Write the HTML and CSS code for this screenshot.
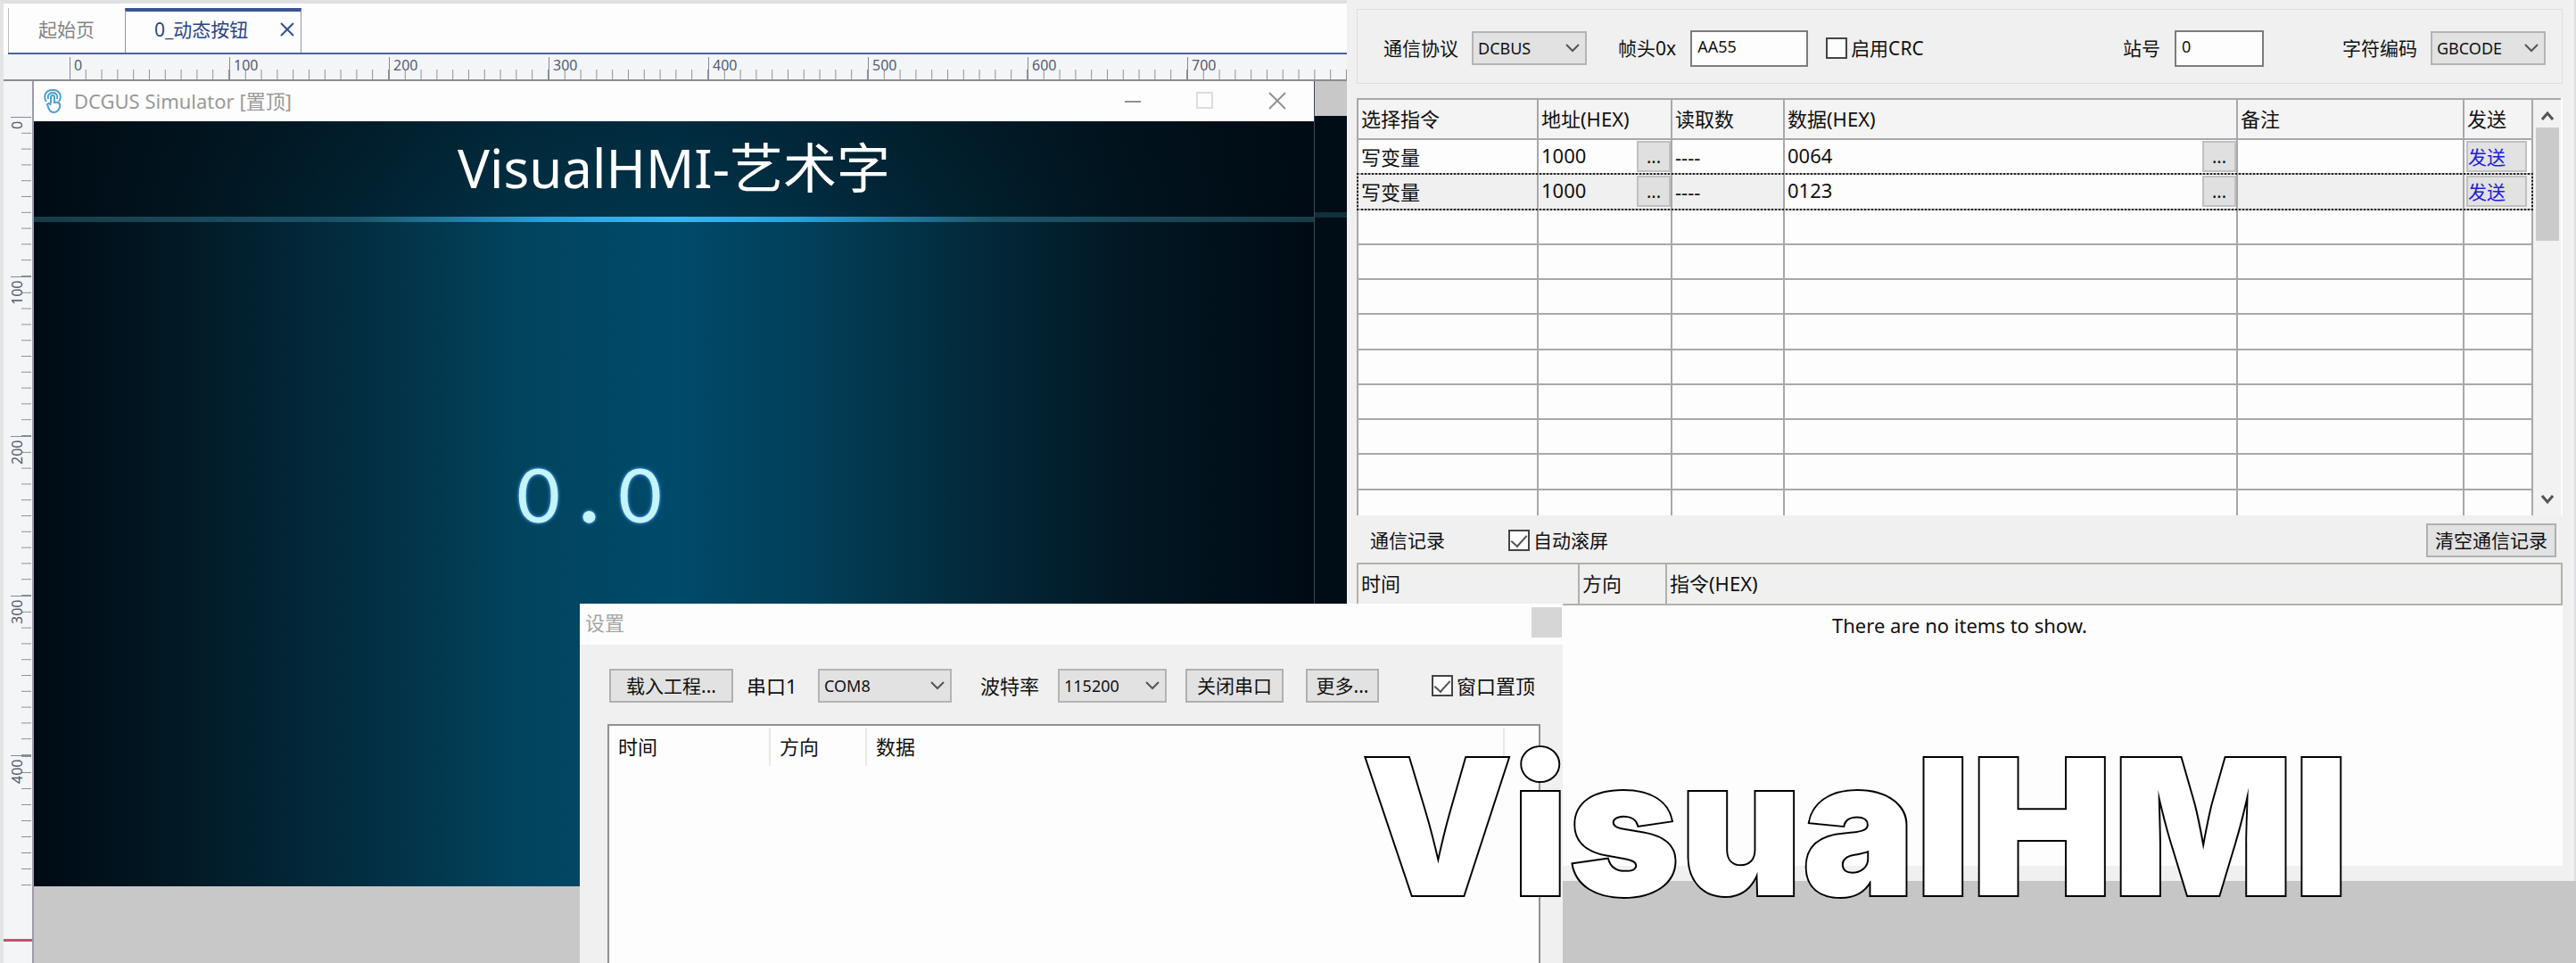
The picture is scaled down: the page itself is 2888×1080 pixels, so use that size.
FILE: index.html
```html
<!DOCTYPE html>
<html lang="zh-CN">
<head>
    <meta charset="UTF-8">
    <title>VisualHMI</title>
    <link rel="stylesheet" href="styles.css">
</head>
<body>
<div class="editor">
    <nav class="tabs">
        <a class="tab" href="#start">起始页</a>
        <div class="tab active">
            <a href="#button">0_动态按钮</a>
            <button class="tab-close" aria-label="关闭">
                <svg width="16" height="16" viewBox="0 0 16 16"><path d="M1 1L15 15M15 1L1 15"/></svg>
            </button>
        </div>
    </nav>
    <div class="ruler-h">
        <span>0</span><span>100</span><span>200</span><span>300</span><span>400</span><span>500</span><span>600</span><span>700</span>
    </div>
    <div class="workspace">
        <div class="ruler-v">
            <span>0</span><span>100</span><span>200</span><span>300</span><span class="last">400</span>
            <i class="marker"></i>
        </div>
        <div class="canvas">
            <div class="page-back"></div>
            <section class="simulator">
                <header class="sim-title">
                    <svg class="sim-icon" width="20" height="28" viewBox="0 0 20 28">
                        <path d="M3 15C0 11 0 2 10 2s10 9 7 13"/>
                        <path d="M5 12C4 8 6 5 10 5s6 3 5 7"/>
                        <path d="M8 17V10a2 2 0 0 1 4 0v6c5-1 7 1 6 5-1 4-3 6-7 6-4 0-6-5-7-9 1-2 3-1 4 1"/>
                    </svg>
                    <span>DCGUS Simulator [置顶]</span>
                    <div class="win-buttons">
                        <button aria-label="最小化"><svg width="20" height="20" viewBox="0 0 20 20"><path d="M1 11H19"/></svg></button>
                        <button aria-label="最大化" disabled><svg width="20" height="20" viewBox="0 0 20 20"><path d="M1 1H18V18H1Z"/></svg></button>
                        <button aria-label="关闭"><svg width="20" height="20" viewBox="0 0 20 20"><path d="M1 1L19 19M19 1L1 19"/></svg></button>
                    </div>
                </header>
                <div class="screen">
                    <h1>VisualHMI-艺术字</h1>
                    <div class="art-number"><span>0</span><span class="dot">.</span><span>0</span></div>
                </div>
            </section>
        </div>
    </div>
</div>

<div class="side">
    <div class="panel">
        <div class="protocol">
            <label for="protocol">通信协议</label>
            <span class="select w-129">
                <select id="protocol"><option>DCBUS</option></select>
                <svg width="16" height="10" viewBox="0 0 16 10"><path d="M1 1L8 8L15 1"/></svg>
            </span>
            <label for="head" class="gap">帧头0x</label>
            <input type="text" id="head" class="w-132" value="AA55">
            <label class="check"><input type="checkbox">启用CRC</label>
            <label for="station" class="push">站号</label>
            <input type="text" id="station" class="w-100" value="0">
            <label for="charset" class="gap wide">字符编码</label>
            <span class="select w-129">
                <select id="charset"><option>GBCODE</option></select>
                <svg width="16" height="10" viewBox="0 0 16 10"><path d="M1 1L8 8L15 1"/></svg>
            </span>
        </div>

        <div class="grid">
            <div class="grid-view">
                <table class="commands">
                    <colgroup><col class="c1"><col class="c2"><col class="c3"><col class="c4"><col class="c5"><col class="c6"></colgroup>
                    <thead>
                        <tr><th>选择指令</th><th>地址(HEX)</th><th>读取数</th><th>数据(HEX)</th><th>备注</th><th>发送</th></tr>
                    </thead>
                    <tbody>
                        <tr>
                            <td>写变量</td>
                            <td><div class="cell">1000<button>...</button></div></td>
                            <td>----</td>
                            <td><div class="cell">0064<button>...</button></div></td>
                            <td></td>
                            <td><button class="send">发送</button></td>
                        </tr>
                        <tr class="selected">
                            <td>写变量</td>
                            <td><div class="cell">1000<button>...</button></div></td>
                            <td>----</td>
                            <td class="edit"><div class="cell">0123<button>...</button></div></td>
                            <td></td>
                            <td><button class="send">发送</button></td>
                        </tr>
                        <tr><td></td><td></td><td></td><td></td><td></td><td></td></tr>
                        <tr><td></td><td></td><td></td><td></td><td></td><td></td></tr>
                        <tr><td></td><td></td><td></td><td></td><td></td><td></td></tr>
                        <tr><td></td><td></td><td></td><td></td><td></td><td></td></tr>
                        <tr><td></td><td></td><td></td><td></td><td></td><td></td></tr>
                        <tr><td></td><td></td><td></td><td></td><td></td><td></td></tr>
                        <tr><td></td><td></td><td></td><td></td><td></td><td></td></tr>
                        <tr><td></td><td></td><td></td><td></td><td></td><td></td></tr>
                        <tr><td></td><td></td><td></td><td></td><td></td><td></td></tr>
                    </tbody>
                </table>
            </div>
            <div class="scrollbar">
                <svg width="14" height="12" viewBox="0 0 14 12"><path d="M1 10L7 3L13 10"/></svg>
                <div class="thumb"></div>
                <svg width="14" height="12" viewBox="0 0 14 12"><path d="M1 2L7 9L13 2"/></svg>
            </div>
        </div>

        <div class="log-bar">
            <span>通信记录</span>
            <label class="check"><input type="checkbox" checked>自动滚屏</label>
            <button class="btn">清空通信记录</button>
        </div>
        <table class="log">
            <colgroup><col class="l1"><col class="l2"><col></colgroup>
            <tr><th>时间</th><th>方向</th><th>指令(HEX)</th></tr>
        </table>
        <div class="log-body">There are no items to show.</div>
    </div>
    <div class="backdrop"></div>
</div>

<!-- serial port settings -->
<section class="settings">
    <header class="settings-title">
        <span>设置</span>
        <button aria-label="关闭"></button>
    </header>
    <div class="settings-bar">
        <button class="btn load">载入工程...</button>
        <label for="port" class="port">串口1</label>
        <span class="select w-150">
            <select id="port"><option>COM8</option></select>
            <svg width="16" height="10" viewBox="0 0 16 10"><path d="M1 1L8 8L15 1"/></svg>
        </span>
        <label for="baud" class="baud">波特率</label>
        <span class="select w-122">
            <select id="baud"><option>115200</option></select>
            <svg width="16" height="10" viewBox="0 0 16 10"><path d="M1 1L8 8L15 1"/></svg>
        </span>
        <button class="btn close-port">关闭串口</button>
        <button class="btn more">更多...</button>
        <label class="check"><input type="checkbox" checked>窗口置顶</label>
    </div>
    <div class="records">
        <table>
            <colgroup><col class="r1"><col class="r2"><col><col class="r4"></colgroup>
            <tr><th>时间</th><th>方向</th><th>数据</th><th></th></tr>
        </table>
    </div>
</section>

<div class="watermark">VisualHMI</div>
</body>
</html>
```
FILE: styles.css
```css
* {
    box-sizing: border-box;
}

body {
    margin: 0;
    height: 100vh;
    display: flex;
    position: relative;
    overflow: hidden;
    background: #f0f0f0;
    color: #111;
    font-family: "Noto Sans", "Noto Sans CJK SC", sans-serif;
    font-size: 22px;
    line-height: 30px;
}

button, input, select {
    font-family: inherit;
    color: inherit;
    margin: 0;
    padding: 0;
    border-radius: 0;
}

svg {
    fill: none;
    stroke: #555;
    stroke-width: 2;
}

/* editor */
.editor {
    flex: 1506;
    min-width: 0;
    display: flex;
    flex-direction: column;
    background: #fdfdfd;
    border-left: 4px solid #e4e4e4;
    border-top: 4px solid #e0e0e0;
}

.tabs {
    display: flex;
    height: 57px;
    padding-top: 5px;
    margin-left: 5px;
    border-bottom: 2px solid #4a649c;
    font-size: 21px;
}

.tab {
    width: 131px;
    margin: 0;
    padding: 9px 0 0 33px;
    border-left: 1px solid #bbb;
    color: #848484;
    text-decoration: none;
}

.tab.active {
    display: flex;
    align-items: flex-start;
    justify-content: space-between;
    width: 198px;
    padding: 5px 7px 0 32px;
    border: 1px solid #8c96b4;
    border-top: 4px solid #3c5496;
    border-bottom: none;
}

.tab.active a {
    color: #2c4484;
    text-decoration: none;
}

.tab-close {
    border: none;
    background: none;
    height: 30px;
    display: flex;
    align-items: center;
}

.tab-close svg {
    stroke: #34508c;
}

.ruler-h {
    display: flex;
    height: 30px;
    padding-left: 74px;
    overflow: hidden;
    background: #f4f5f7;
    border-bottom: 2px solid #8c8c90;
    font-size: 16px;
    line-height: 18px;
    color: #555c70;
}

.ruler-h span {
    flex: 0 0 179px;
    margin-top: 3px;
    padding-left: 4px;
    border-left: 1px solid #84889c;
    background: linear-gradient(to right, #909090 1px, transparent 1px) -1px 100% / 10% 11px repeat-x;
}

.workspace {
    flex: 1;
    display: flex;
    min-height: 0;
}

.ruler-v {
    flex: 0 0 34px;
    position: relative;
    padding: 40px 1px 0 8px;
    background: #f4f5f7;
    border-right: 2px solid #9a9cb0;
    font-size: 16px;
    line-height: 14px;
    color: #555c70;
}

.ruler-v span {
    display: block;
    width: 100%;
    height: 179px;
    padding-bottom: 4px;
    padding-left: 9px;
    writing-mode: vertical-rl;
    transform: rotate(180deg);
    text-align: right;
    border-bottom: 1px solid #84889c;
    background: linear-gradient(to top, #909090 1px, transparent 1px) 0 1px / 11px 10% repeat-y;
}

.ruler-v .last {
    height: 146px;
    background-size: 11px 18px;
    background-position: 0 100%;
}

.marker {
    position: absolute;
    left: 0;
    right: 0;
    bottom: 24px;
    height: 3px;
    background: #c8506c;
}

.canvas {
    flex: 1;
    position: relative;
    background: #c8c8c8;
}

.page-back {
    position: absolute;
    top: 39px;
    right: 0;
    width: 36px;
    height: 864px;
    background: linear-gradient(#10303a, #10303a) 0 108px / 100% 6px no-repeat #010d16;
}

.simulator {
    position: absolute;
    left: 0;
    top: 0;
    width: calc(100% - 36px);
    border-right: 1px solid #404854;
}

.sim-title {
    display: flex;
    align-items: center;
    height: 45px;
    padding: 0 21px 2px 11px;
    background: #fdfdfd;
    color: #999;
}

.sim-icon {
    margin-right: 14px;
    stroke: #4ca0cc;
}

.win-buttons {
    margin-left: auto;
    display: flex;
    gap: 61px;
    padding-right: 10px;
}

.win-buttons button {
    display: flex;
    border: none;
    background: none;
}

.win-buttons svg {
    stroke: #929292;
}

.win-buttons button:disabled svg {
    stroke: #ddd;
}

.screen {
    height: 858px;
    background:
        linear-gradient(to right, #173c48, #1c5468 25%, #28a0dc 40%, #38b8f4 50%, #28a0dc 60%, #1c5468 75%, #173c48) 0 107px / 100% 6px no-repeat,
        linear-gradient(rgba(0, 12, 20, 0.5), rgba(0, 12, 20, 0.35)) 0 0 / 100% 107px no-repeat,
        linear-gradient(to right, #000a14, #021a26 12%, #033044 27%, #02445e 38%, #004a6a 50%, #02405a 60%, #032c3e 72%, #021824 85%, #000a14);
}

.screen h1 {
    margin: 0;
    padding-top: 8px;
    font-size: 60px;
    font-weight: 400;
    line-height: 88px;
    text-align: center;
    color: #fff;
}

.art-number {
    display: flex;
    justify-content: center;
    margin-top: 272px;
    padding-right: 190px;
    font-family: Lato, sans-serif;
    font-size: 84px;
    line-height: 100px;
    color: #c4f4fc;
    text-shadow: 0 0 4px #4c9cf4, 0 0 2px #4c9cf4;
}

.art-number span {
    width: 57px;
    text-align: center;
}

.art-number .dot {
    font-weight: 900;
}

/* right side */
.side {
    flex: 1378;
    min-width: 0;
    display: flex;
    flex-direction: column;
}

.panel {
    flex: 1;
    display: flex;
    flex-direction: column;
    padding: 10px 13px 17px 11px;
    border-right: 2px solid #dcdce4;
}

.backdrop {
    height: 92px;
    background: #c6c6c6;
}

.protocol {
    display: flex;
    align-items: center;
    height: 84px;
    padding: 4px 18px 0 29px;
    border: 1px solid #dedede;
    font-size: 21px;
}

.protocol > .select {
    margin-left: 15px;
}

.protocol > input {
    margin-left: 16px;
}

.protocol .gap {
    margin-left: 35px;
}

.protocol .wide {
    margin-left: 88px;
}

.protocol .check {
    margin-left: 20px;
}

.protocol .push {
    margin-left: auto;
}

.w-100 { width: 100px; }
.w-122 { width: 122px; }
.w-129 { width: 129px; }
.w-132 { width: 132px; }
.w-150 { width: 150px; }

input[type="text"] {
    height: 41px;
    padding: 0 6px 4px;
    border: 2px solid #7c7c7c;
    background: #fdfdfd;
    font-size: 18px;
}

.select {
    display: inline-block;
    position: relative;
    height: 38px;
}

.select select {
    appearance: none;
    width: 100%;
    height: 38px;
    padding-left: 5px;
    border: 2px solid #b4b4b4;
    background: #e2e2e2;
    font-size: 18px;
}

.select svg {
    position: absolute;
    right: 8px;
    top: 14px;
}

.check {
    display: flex;
    align-items: center;
}

.check input {
    appearance: none;
    width: 24px;
    height: 24px;
    margin-right: 4px;
    border: 2px solid #444;
    background: #fdfdfd;
    display: flex;
    justify-content: center;
}

.check input:checked::after {
    content: "";
    width: 8px;
    height: 15px;
    border: solid #555;
    border-width: 0 2px 2px 0;
    transform: rotate(42deg);
}

.btn {
    height: 38px;
    border: 2px solid #b0b0b0;
    background: #e2e2e2;
    font-size: 21px;
    line-height: 30px;
    white-space: nowrap;
}

.grid {
    display: flex;
    height: 468px;
    padding-right: 2px;
    margin-top: 16px;
    background: #fdfdfd;
}

.grid-view {
    flex: 1;
    overflow: hidden;
}

table {
    border-collapse: collapse;
    table-layout: fixed;
    width: 100%;
}

th, td {
    text-align: left;
    font-weight: 400;
    padding: 0 0 2px 3px;
}

.commands {
    height: 479px;
}

.commands th, .commands td {
    border: 2px solid #a8a8ac;
}

.commands th {
    height: 45px;
    background: #f4f4f4;
}

.commands td {
    height: 39px;
    padding-bottom: 0;
    line-height: 32px;
}

.c1 { width: 202px; }
.c2 { width: 150px; }
.c3 { width: 126px; }
.c5 { width: 254px; }
.c6 { width: 77px; }

.cell {
    display: flex;
    justify-content: space-between;
}

.cell button {
    width: 38px;
    height: 35px;
    border: 2px solid #c0c0c0;
    background: #e0e0e0;
    font-size: 20px;
}

.commands .send {
    display: block;
    width: 68px;
    height: 35px;
    margin-left: -1px;
    border: 2px solid #c0c0c0;
    background: #e2e2e2;
    color: #2020d8;
    font-size: 21px;
    line-height: 30px;
    text-align: left;
}

.selected {
    outline: 2px dotted #222;
    outline-offset: -1px;
}

.selected td {
    background: #f0f0f0;
}

.selected .edit {
    background: #fdfdfd;
}

.scrollbar {
    width: 31px;
    padding: 12px 2px;
    display: flex;
    flex-direction: column;
    align-items: center;
    border-top: 2px solid #a8a8ac;
    background: #f2f2f2;
}

.scrollbar svg {
    stroke-width: 3;
}

.thumb {
    width: 26px;
    height: 127px;
    margin: 7px 0 auto;
    background: #cacaca;
}

.log-bar {
    display: flex;
    align-items: center;
    height: 53px;
    padding: 2px 7px 0 15px;
    font-size: 21px;
}

.log-bar .check {
    margin-left: 71px;
}

.log-bar .btn {
    width: 146px;
    margin-left: auto;
}

.log th {
    height: 46px;
    border: 2px solid #b0b0ac;
    background: #f0f0f0;
}

.l1 { width: 248px; }
.l2 { width: 98px; }

.log-body {
    flex: 1;
    padding-top: 7px;
    background: #fdfdfd;
    text-align: center;
}

/* settings window */
.settings {
    position: absolute;
    left: 650px;
    top: 677px;
    bottom: 0;
    width: 1102px;
    display: flex;
    flex-direction: column;
    background: #f0f0f0;
}

.settings-title {
    display: flex;
    justify-content: space-between;
    height: 46px;
    padding: 4px 1px 0 6px;
    background: #fdfdfd;
    color: #a4a4a4;
}

.settings-title button {
    width: 34px;
    height: 34px;
    border: none;
    background: #d6d6d6;
}

.settings-title span {
    line-height: 34px;
}

.settings-bar {
    display: flex;
    align-items: center;
    height: 89px;
    padding: 3px 31px 0 33px;
}

.load {
    width: 139px;
}

.port {
    width: 80px;
    margin-left: 15px;
}

.baud {
    width: 87px;
    margin-left: 32px;
}

.close-port {
    width: 110px;
    margin-left: 21px;
}

.more {
    width: 82px;
    margin-left: 25px;
}

.settings-bar .check {
    margin-left: auto;
}

.records {
    flex: 1;
    margin: 0 25px 0 31px;
    padding-top: 2px;
    border: 2px solid #909090;
    border-bottom: none;
    background: #fdfdfd;
}

.records th {
    height: 43px;
    padding-left: 10px;
    border-right: 2px solid #e8e8e8;
}

.records th:last-child {
    border-right: none;
}

.r1 { width: 180px; }
.r2 { width: 108px; }
.r4 { width: 39px; }

.watermark {
    position: absolute;
    left: 1527px;
    top: 807px;
    font-family: Inter, sans-serif;
    font-size: 212px;
    font-weight: 900;
    line-height: 240px;
    color: #fff;
    -webkit-text-stroke: 4px #000;
    paint-order: stroke fill;
    white-space: nowrap;
}
```
